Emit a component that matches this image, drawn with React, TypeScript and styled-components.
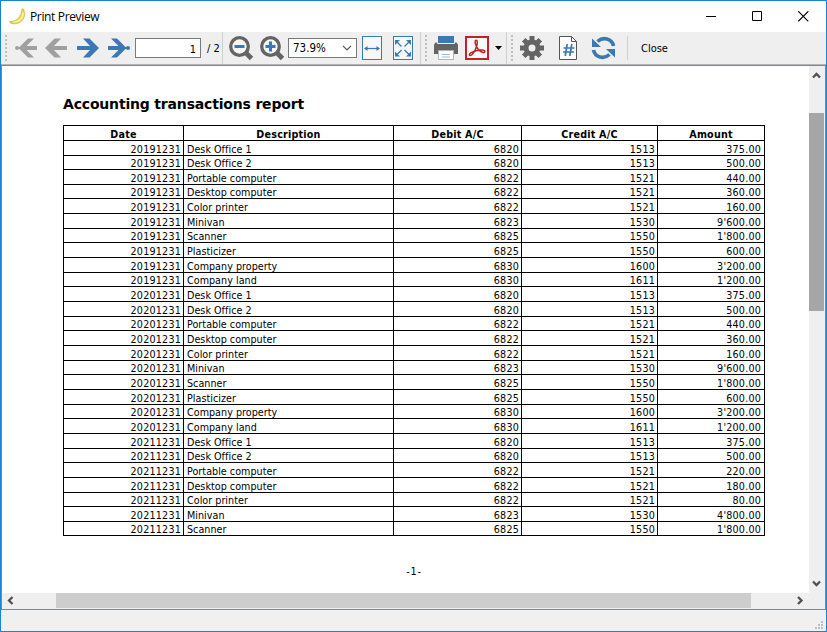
import React from "react";
import styled, { createGlobalStyle } from "styled-components";

const Global = createGlobalStyle`
  * { box-sizing: border-box; }
  body { margin: 0; overflow: hidden; }
`;
const uiFont = `"DejaVu Sans Condensed", "DejaVu Sans", sans-serif`;
const docFont = `"DejaVu Sans", Verdana, sans-serif`;

const Window = styled.div`
  width: 827px; height: 632px; display: flex; flex-direction: column;
  border: 1px solid #1883d7; background: #f0f0f0; color: #000;
`;
const TitleBar = styled.header`
  height: 31px; flex: none; background: #fff; display: flex; align-items: center;
  padding-left: 7px;
`;
const Title = styled.h1`
  margin: 0 auto 0 4px; font: 400 12px/16px "Open Sans", sans-serif; letter-spacing: -0.35px;
`;
const WindowButton = styled.button`
  width: 46px; height: 30px; padding: 0; border: 0; background: none; display: grid; place-items: center;
`;
const Toolbar = styled.nav`
  height: 33px; flex: none; display: flex; align-items: center; background: #efefef;
  border-bottom: 1px solid #b4b4b4;
`;
const Gap = styled.span<{ $w: number }>`flex: none; width: ${p => p.$w}px;`;
const Tool = styled.button<{ $w: number }>`
  flex: none; width: ${p => p.$w}px; height: 26px; padding: 0; border: 0; background: none; display: grid; place-items: center;
  svg { display: block; }
`;
const Grip = styled.span`
  flex: none; width: 2px; height: 26px;
  background: repeating-linear-gradient(#bdbdbd 0 2px, transparent 2px 4px);
`;
const Divider = styled.span<{ $tall?: boolean }>`
  flex: none; width: 1px; height: ${p => (p.$tall ? 32 : 24)}px; background: #d0d0d0;
`;
const PageField = styled.div`
  width: 66px; height: 20px; flex: none; border: 1px solid #7a7a7a; background: #fff;
  text-align: right; padding-right: 4px; font: 11px/21px ${uiFont};
`;
const ZoomField = styled.div`
  width: 69px; height: 20px; flex: none; border: 1px solid #7a7a7a; background: #fff;
  display: flex; align-items: center; justify-content: space-between;
  padding: 0 4px; font: 11.5px/20px ${uiFont};
`;
const Label = styled.span<{ $w: number }>`
  flex: none; width: ${p => p.$w}px; padding-top: 1px; white-space: nowrap; font: 11px/20px ${uiFont};
`;
const Preview = styled.main`
  height: 545px; flex: none; display: grid; grid-template: 527px 16px / 807px 16px;
  border: 1px solid #828790; background: #efefef;
`;
const Page = styled.section`background: #fff; padding: 28px 0 0 61px; overflow: hidden; font-family: ${docFont};`;
const Heading = styled.h2`
  margin: 0; font: 700 14px/20px ${docFont}; height: 31px; white-space: nowrap; letter-spacing: -0.18px;
`;
const Report = styled.table`
  width: 702px; table-layout: fixed; border-collapse: separate; border-spacing: 0;
  border-top: 1px solid #000; border-left: 1px solid #000; font-size: 9.6px;
`;
const Row = styled.tr<{ $h: number }>`height: ${p => p.$h}px;`;
const Cell = styled.td<{ $left?: boolean }>`
  padding: ${p => (p.$left ? "2px 0 0 3px" : "2px 2px 0 0")}; line-height: 11px; text-align: ${p => (p.$left ? "left" : "right")};
  border-right: 1px solid #000; border-bottom: 1px solid #000; white-space: nowrap;
  letter-spacing: ${p => (p.$left ? "0.03px" : "0.2px")};
  &:last-child { padding-right: 3px; }
`;
const HeadCell = styled.th`
  padding: 2px 0 0; line-height: 11px; border-right: 1px solid #000; border-bottom: 1px solid #000; letter-spacing: 0.2px;
`;
const PageNumber = styled.p`
  margin: 30px 0 0; width: 702px; text-align: center; font-size: 9.6px; line-height: 12px; letter-spacing: 0.9px;
`;
const VBar = styled.div`display: flex; flex-direction: column; width: 15px; align-items: center;`;
const VThumb = styled.div`width: 15px; height: 198px; margin: 29px 0 264px; flex: none; background: #a6a6a6;`;
const HBar = styled.div`display: flex; height: 15px; align-items: center;`;
const HThumb = styled.div`width: 695px; height: 15px; margin: 0 41px 0 39px; background: #cdcdcd;`;
const Chevron = styled.svg<{ $thin?: boolean }>`
  display: block; fill: none; stroke: #505050; stroke-width: ${p => (p.$thin ? 1.2 : 2.3)}; flex: none;
`;
const Status = styled.footer`flex: 1; display: flex; justify-content: flex-end; align-items: flex-end; padding: 0 2px 2px;`;

const BLUE = "#3c78b4";
const GRAY = "#646464";

const Arrow = ({ back, dot }: { back?: boolean; dot?: boolean }) => (
  <svg width="24" height="20" viewBox="0 0 24 20">
    <g transform={back ? "translate(24 0) scale(-1 1)" : undefined} fill={back ? "#a0a0a0" : BLUE}>
      {dot ? (
        <>
          <path d="M1 8h10.500L4 0.500H10L18.500 9h2v2h-2L10 19.500H4L11.500 12H1z" />
          <circle cx="21" cy="10" r="2" />
        </>
      ) : (
        <path d="M1 8h13L7 0.500h6.500l9.500 9.500-9.500 9.500H7L14 12H1z" />
      )}
    </g>
  </svg>
);
const Lens = ({ plus }: { plus?: boolean }) => (
  <svg width="26" height="26" viewBox="0 0 26 26">
    <circle cx="11.500" cy="11.500" r="8.800" fill="#f6f6f6" stroke={GRAY} strokeWidth="3.300" />
    <path d="M17.500 17.500l6 6" stroke={GRAY} strokeWidth="4.800" />
    <path d={plus ? "M6.500 11.500h10M11.500 6.500v10" : "M6.500 11.500h10"} stroke={BLUE} strokeWidth="3" />
  </svg>
);
const FitWidth = () => (
  <svg width="20" height="24" viewBox="0 0 20 24" stroke={BLUE}>
    <rect x=".5" y=".5" width="19" height="23" fill="#f8f8f8" />
    <path d="M4 12.500h12" strokeWidth="1.200" />
    <path d="M2 12.500l3.500-2.500v5zM18 12.500l-3.500-2.500v5z" fill={BLUE} stroke="none" />
  </svg>
);
const FitPage = () => (
  <svg width="20" height="24" viewBox="0 0 20 24" stroke={BLUE}>
    <rect x=".5" y=".5" width="19" height="23" fill="#f8f8f8" />
    <path fill="none" strokeWidth="1.300" d="M4 6l4.500 4.500M16 6l-4.500 4.500M4 18.500l4.500-4.500M16 18.500l-4.500-4.500" />
    <path fill={BLUE} stroke="none" d="M2 4h5L2 9zM18 4h-5l5 5zM2 20.500h5l-5-5zM18 20.500h-5l5-5z" />
  </svg>
);
const Printer = () => (
  <svg width="24" height="24" viewBox="0 0 24 24">
    <path fill={GRAY} d="M1.500 6.500h21L24 8.500V18H0V8.500z" />
    <rect x="4" y="0" width="16" height="7" fill={BLUE} />
    <path d="M3.500 0v7.500h17V0" fill="none" stroke="#efefef" />
    <rect x="4.500" y="14.500" width="15" height="9" fill="#fff" stroke="#b5b5b5" />
    <path d="M8 18.500h8M8 21h8" stroke="#9db9d9" />
  </svg>
);
const Pdf = () => (
  <svg width="24" height="24" viewBox="0 0 24 24" fill="none" stroke="#c8202a">
    <rect x="1" y="1" width="22" height="22" fill="#fafafa" strokeWidth="2" />
    <path strokeWidth="1.500" strokeLinejoin="round" d="M11 4.300c2.200 0 1.300 4.700-.2 8.200-1.500 3.600-4.500 8-6.200 6.800-1.400-1.200 3-4 7.400-4.900 4-.8 8-.6 7.800 1.200-.2 1.900-4.300.6-6.800-2.600C10.800 10.500 9 4.500 11 4.300z" />
  </svg>
);
const Gear = () => (
  <svg width="24" height="24" viewBox="0 0 24 24" fill="none" stroke={GRAY}>
    <circle cx="12" cy="12" r="6" strokeWidth="5" />
    <path strokeWidth="5" d="M12 0v5M12 19v5M0 12h5M19 12h5M3.700 3.700l3.300 3.300M17 17l3.300 3.300M3.700 20.300L7 17M17 7l3.300-3.300" />
  </svg>
);
const NumberPage = () => (
  <svg width="18" height="24" viewBox="0 0 18 24">
    <path d="M.5.5h12l5 5v18H.5z" fill="#fff" stroke="#555" />
    <path d="M12.500.5v5h5" fill="none" stroke="#555" />
    <path d="M8.200 8l-2 12M12.800 8l-2 12M4.500 12h11M4 16h11" stroke={BLUE} strokeWidth="1.700" />
  </svg>
);
const Refresh = () => (
  <svg width="25" height="24" viewBox="0 0 25 24">
    <path d="M22.500 10C21 2.500 12 .5 6.500 5.500M2.500 14c1.500 7.500 10.500 9.500 16 4.500" fill="none" stroke={BLUE} strokeWidth="3.700" />
    <path d="M1 2.500v8.500h9zM24 21.500V13h-9z" fill={BLUE} />
  </svg>
);
const Banana = () => (
  <svg width="18" height="17" viewBox="0 0 18 17">
    <path d="M14 .8l1.700.4c-.2 1.500.8 2.300 1 4.300.3 5.500-4.200 10-10 10.300-2.700.1-5-.6-5.200-2.100C8 13.500 13.500 9.500 14 .8z" fill="#f0d94e" stroke="#c9a94a" strokeWidth=".7" />
    <path d="M15 4.500c.6 5.500-4 9.500-9.500 9.700" fill="none" stroke="#fff7a8" strokeWidth="1.300" />
  </svg>
);

const entries: [string, number, number, string, string?][] = [
  ["Desk Office 1", 6820, 1513, "375.00"],
  ["Desk Office 2", 6820, 1513, "500.00"],
  ["Portable computer", 6822, 1521, "440.00", "220.00"],
  ["Desktop computer", 6822, 1521, "360.00", "180.00"],
  ["Color printer", 6822, 1521, "160.00", "80.00"],
  ["Minivan", 6823, 1530, "9'600.00", "4'800.00"],
  ["Scanner", 6825, 1550, "1'800.00"],
  ["Plasticizer", 6825, 1550, "600.00"],
  ["Company property", 6830, 1600, "3'200.00"],
  ["Company land", 6830, 1611, "1'200.00"],
];
const rows = [2019, 2020, 2021]
  .flatMap(y => entries.map(e => [`${y}1231`, e[0], e[1], e[2], y === 2021 ? e[4] ?? e[3] : e[3]]))
  .slice(0, 27);
// Rows are a fractional height at this zoom level, snapped to whole pixels.
const edge = (i: number) => Math.floor(0.36 + i * 14.652);

export default function App() {
  return (
    <Window>
      <Global />
      <TitleBar>
        <Banana />
        <Title>Print Preview</Title>
        <WindowButton aria-label="Minimize"><svg width="11" height="11"><path d="M0 5.500h10" stroke="#000" /></svg></WindowButton>
        <WindowButton aria-label="Maximize"><svg width="11" height="11"><path d="M.5.5h9v9h-9z" fill="none" stroke="#000" /></svg></WindowButton>
        <WindowButton aria-label="Close"><svg width="11" height="11"><path d="M.3.3l10 10M10.300.3l-10 10" stroke="#000" strokeWidth="1.100" /></svg></WindowButton>
      </TitleBar>
      <Toolbar>
        <Gap $w={4} /><Grip /><Gap $w={7} />
        <Tool $w={24}><Arrow back dot /></Tool><Gap $w={6} />
        <Tool $w={24}><Arrow back /></Tool><Gap $w={8} />
        <Tool $w={24}><Arrow /></Tool><Gap $w={7} />
        <Tool $w={24}><Arrow dot /></Tool><Gap $w={4} />
        <PageField>1</PageField><Gap $w={6} />
        <Label $w={15}>/ 2</Label><Divider $tall /><Gap $w={5} />
        <Tool $w={26}><Lens /></Tool><Gap $w={5} />
        <Tool $w={26}><Lens plus /></Tool><Gap $w={3} />
        <ZoomField>73.9%<Chevron $thin width="10" height="6"><path d="M1 .8l4 4 4-4" /></Chevron></ZoomField><Gap $w={5} />
        <Tool $w={20}><FitWidth /></Tool><Gap $w={11} />
        <Tool $w={20}><FitPage /></Tool><Gap $w={7} /><Divider $tall /><Gap $w={4} /><Grip /><Gap $w={7} />
        <Tool $w={24}><Printer /></Tool><Gap $w={7} />
        <Tool $w={24}><Pdf /></Tool><Gap $w={6} />
        <svg width="7" height="4"><path d="M0 0h7L3.500 4z" /></svg><Gap $w={4} />
        <Divider $tall /><Gap $w={4} /><Grip /><Gap $w={7} />
        <Tool $w={24}><Gear /></Tool><Gap $w={15} />
        <Tool $w={18}><NumberPage /></Tool><Gap $w={14} />
        <Tool $w={25}><Refresh /></Tool><Gap $w={11} />
        <Divider /><Gap $w={13} />
        <Label $w={30}>Close</Label>
      </Toolbar>
      <Preview>
        <Page>
          <Heading>Accounting transactions report</Heading>
          <Report>
            <colgroup><col width="120" /><col width="210" /><col width="128" /><col width="136" /><col width="107" /></colgroup>
            <thead><Row $h={15}>{["Date", "Description", "Debit A/C", "Credit A/C", "Amount"].map(h => <HeadCell key={h}>{h}</HeadCell>)}</Row></thead>
            <tbody>
              {rows.map((r, i) => (
                <Row key={i} $h={edge(i + 1) - edge(i)}>
                  {r.map((c, j) => <Cell key={j} $left={j === 1}>{c}</Cell>)}
                </Row>
              ))}
            </tbody>
          </Report>
          <PageNumber>-1-</PageNumber>
        </Page>
        <VBar>
          <Chevron width="9" height="18"><path d="M1 11.500L4.500 8 8 11.500" /></Chevron>
          <VThumb />
          <Chevron width="9" height="18"><path d="M1 6.500L4.500 10 8 6.500" /></Chevron>
        </VBar>
        <HBar>
          <Chevron width="15" height="9"><path d="M10.500 1L7 4.500 10.500 8" /></Chevron>
          <HThumb />
          <Chevron width="16" height="9"><path d="M6 1l3.500 3.500L6 8" /></Chevron>
        </HBar>
      </Preview>
      <Status>
        <svg width="9" height="8" fill="#bfbfbf"><path d="M6 0h2v2H6zM3 3h2v2H3zM6 3h2v2H6zM0 6h2v2H0zM3 6h2v2H3zM6 6h2v2H6z" /></svg>
      </Status>
    </Window>
  );
}
